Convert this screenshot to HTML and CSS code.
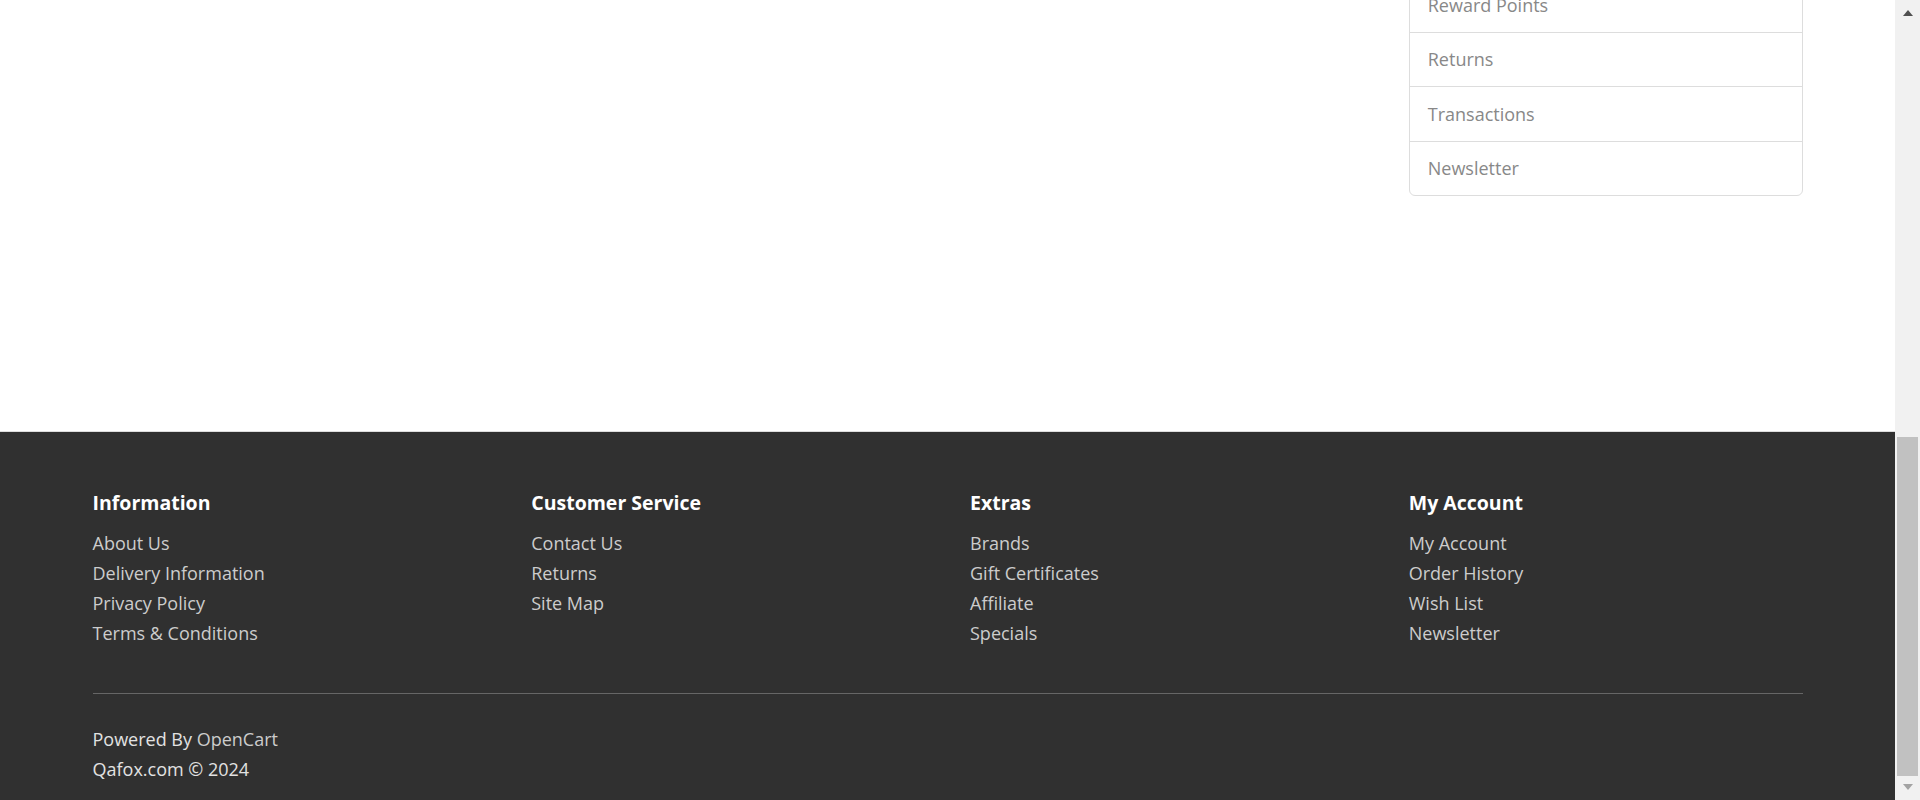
FILE: index.html
```html
<!DOCTYPE html>
<html lang="en">
<head>
<meta charset="utf-8">
<title>Account</title>
<link rel="stylesheet" href="styles.css">
</head>
<body>
<div class="page">
  <div class="container main">
    <div class="row">
      <div id="content" class="col-9"></div>
      <aside class="col-3">
        <div class="list-group">
          <a href="#" class="list-group-item">Reward Points</a>
          <a href="#" class="list-group-item">Returns</a>
          <a href="#" class="list-group-item">Transactions</a>
          <a href="#" class="list-group-item">Newsletter</a>
        </div>
      </aside>
    </div>
  </div>
  <footer class="footer">
    <div class="container">
      <div class="row">
        <div class="col-3">
          <h5 class="footer-title">Information</h5>
          <ul class="footer-links">
            <li><a href="#">About Us</a></li>
            <li><a href="#">Delivery Information</a></li>
            <li><a href="#">Privacy Policy</a></li>
            <li><a href="#">Terms &amp; Conditions</a></li>
          </ul>
        </div>
        <div class="col-3">
          <h5 class="footer-title">Customer Service</h5>
          <ul class="footer-links">
            <li><a href="#">Contact Us</a></li>
            <li><a href="#">Returns</a></li>
            <li><a href="#">Site Map</a></li>
          </ul>
        </div>
        <div class="col-3">
          <h5 class="footer-title">Extras</h5>
          <ul class="footer-links">
            <li><a href="#">Brands</a></li>
            <li><a href="#">Gift Certificates</a></li>
            <li><a href="#">Affiliate</a></li>
            <li><a href="#">Specials</a></li>
          </ul>
        </div>
        <div class="col-3">
          <h5 class="footer-title">My Account</h5>
          <ul class="footer-links">
            <li><a href="#">My Account</a></li>
            <li><a href="#">Order History</a></li>
            <li><a href="#">Wish List</a></li>
            <li><a href="#">Newsletter</a></li>
          </ul>
        </div>
      </div>
      <hr class="footer-rule">
      <p class="powered">Powered By <a href="#">OpenCart</a><br>Qafox.com &copy; 2024</p>
    </div>
  </footer>
</div>
<div class="scrollbar">
  <div class="sb-arrow sb-up"></div>
  <div class="sb-track"><div class="sb-thumb"></div></div>
  <div class="sb-arrow sb-down"></div>
</div>
</body>
</html>
```

FILE: styles.css
```css
html, body {
  margin: 0;
  padding: 0;
  height: 800px;
  overflow: hidden;
}

body {
  display: flex;
  font-family: "Open Sans", "Liberation Sans", sans-serif;
  font-size: 18px;
  line-height: 30px;
  color: #666;
  background: #fff;
}

a {
  text-decoration: none;
}

.page {
  width: 1895px;
  flex: 0 0 1895px;
  height: 800px;
  overflow: hidden;
  display: flex;
  flex-direction: column;
}

.main {
  flex: 0 0 auto;
}

.container {
  width: 1755px;
  margin: 0 auto;
  padding: 0 22.5px;
  box-sizing: border-box;
}

.row {
  display: flex;
  margin: 0 -22.5px;
}

.col-9,
.col-3 {
  box-sizing: border-box;
  padding: 0 22.5px;
}

.col-9 { width: 75%; }
.col-3 { width: 25%; }

#content {
  min-height: 386px;
}

/* sidebar list (page scrolled, first item partially above the window) */
.list-group {
  margin-top: -23px;
  display: flex;
  flex-direction: column;
}

.list-group-item {
  display: block;
  padding: 11.75px 18px;
  border: 1px solid #ddd;
  margin-bottom: -1px;
  color: #888;
  font-size: 18px;
  line-height: 30px;
}

.list-group-item:last-child {
  margin-bottom: 0;
  border-bottom-left-radius: 6px;
  border-bottom-right-radius: 6px;
}

/* footer */
.footer {
  flex: 1 0 auto;
  margin-top: 45px;
  padding-top: 45px;
  background: #303030;
  border-top: 1px solid #ddd;
  color: #e2e2e2;
}

.footer-title {
  margin: 15px 0;
  font-size: 19.5px;
  line-height: 1.1;
  font-weight: 700;
  color: #fff;
}

.footer-links {
  list-style: none;
  margin: 0 0 15px;
  padding: 0;
}

.footer-links a,
.powered a {
  color: #ccc;
}

.footer-rule {
  margin: 30px 0;
  height: 0;
  border: 0;
  border-bottom: 1px solid #666;
}

.powered {
  margin: 0;
}

/* window scrollbar */
.scrollbar {
  flex: 0 0 25px;
  height: 800px;
  background: #f1f1f1;
  display: flex;
  flex-direction: column;
  align-items: center;
}

.sb-arrow {
  width: 0;
  height: 0;
  border-left: 5.5px solid transparent;
  border-right: 5.5px solid transparent;
}

.sb-up {
  margin-top: 10px;
  border-bottom: 6px solid #505050;
}

.sb-down {
  margin-bottom: 10px;
  border-top: 6px solid #a3a3a3;
}

.sb-track {
  flex: 1;
  width: 100%;
  display: flex;
  flex-direction: column;
  justify-content: flex-end;
  padding: 0 2px 8px;
  box-sizing: border-box;
}

.sb-thumb {
  height: 339px;
  background: #c1c1c1;
}
```
